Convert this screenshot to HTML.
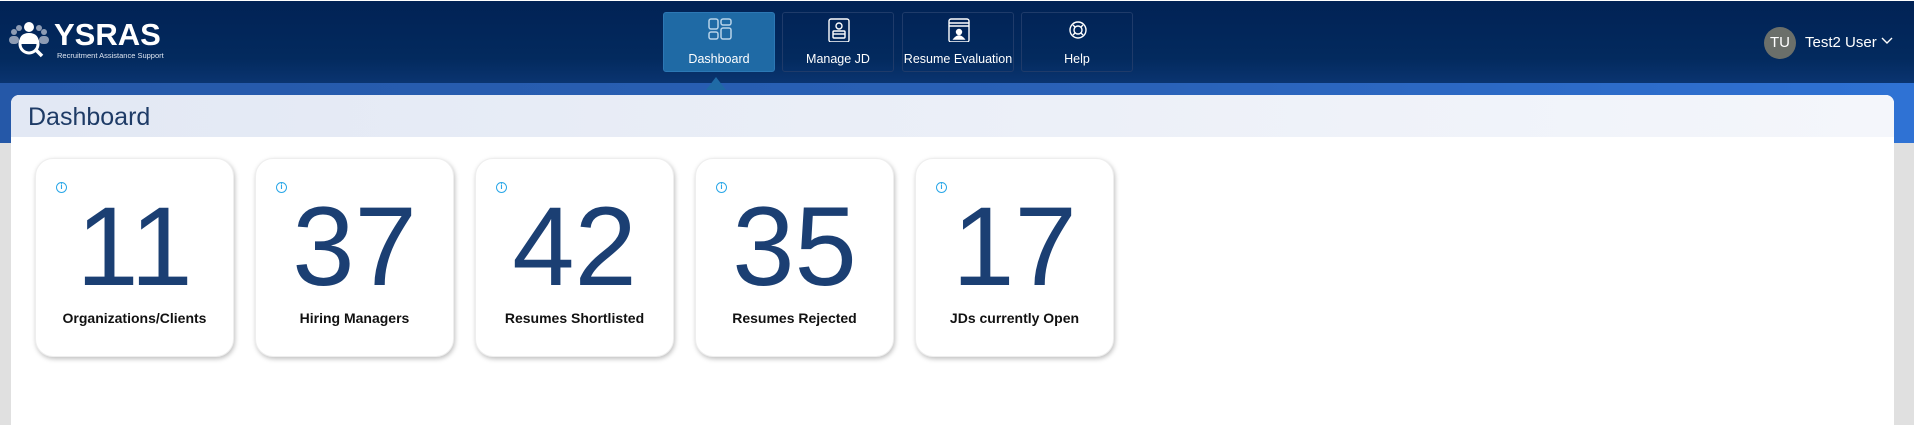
<!DOCTYPE html>
<html><head><meta charset="utf-8"><style>
*{margin:0;padding:0;box-sizing:border-box}
body{width:1914px;height:407px;overflow:hidden;background:#e0e0e0;font-family:"Liberation Sans",sans-serif;position:relative}
.hdr{position:absolute;left:0;top:1px;width:1914px;height:82px;background:linear-gradient(#012255 0%,#032a5e 70%,#0a3470 100%)}
.band{position:absolute;left:0;top:83px;width:1914px;height:60px;background:linear-gradient(90deg,#2558a8,#2a62b8 60%,#2f72d4)}
.panel{position:absolute;left:11px;top:95px;width:1883px;height:330px;background:#fff;border-radius:8px 8px 0 0;overflow:hidden}
.ph{height:42px;background:linear-gradient(90deg,#e2e8f4,#f4f6fb);padding-left:17px;font-size:25px;color:#1e3b66;line-height:44px}
.nav{position:absolute;top:12px;width:112px;height:60px;border:1px solid #1f3b6a;border-radius:3px;color:#fff;font-size:12.5px;text-align:center}
.nav span{position:absolute;left:0;right:0;top:39px;white-space:nowrap}
.nav svg{position:absolute;left:44px;top:5px}
.card{position:absolute;top:158px;width:199px;height:199px;background:#fff;border-radius:18px;box-shadow:1px 2px 5px rgba(0,0,0,.25);border:1px solid #eee}
.card .i{position:absolute;left:20px;top:23px;width:11px;height:11px;border:1.3px solid #2aa7e8;border-radius:50%;color:#2aa7e8;font-size:8px;line-height:8px;text-align:center;font-weight:bold}
.card .n{position:absolute;left:0;right:0;top:18px;text-align:center;font-size:112px;color:#1b3f73;line-height:140px;letter-spacing:0}
.card .l{position:absolute;left:0;right:0;top:151px;text-align:center;font-size:14px;font-weight:bold;color:#111}
</style></head><body>
<div style="position:absolute;left:0;top:0;width:1914px;height:1px;background:#fff"></div>
<div class="hdr"></div>
<div class="band"></div>
<svg style="position:absolute;left:7px;top:20px" width="44" height="40" viewBox="0 0 44 40">
<g fill="#8e9cb4"><circle cx="7" cy="12" r="3"/><rect x="2" y="16" width="10" height="8" rx="4"/><circle cx="37" cy="12" r="3"/><rect x="32" y="16" width="10" height="8" rx="4"/><circle cx="12" cy="8" r="3"/><circle cx="32" cy="8" r="3"/></g>
<circle cx="22" cy="7" r="5" fill="#fff"/><path d="M12 24 Q12 13 22 13 Q32 13 32 24Z" fill="#fff"/>
<circle cx="22" cy="24" r="9" fill="none" stroke="#fff" stroke-width="3"/><path d="M29 30 L35 36" stroke="#fff" stroke-width="3.5"/></svg>
<div style="position:absolute;left:54px;top:17px;font-size:31px;font-weight:bold;color:#fff;letter-spacing:0">YSRAS</div>
<div style="position:absolute;left:57px;top:51px;font-size:7.5px;color:#dfe6f2">Recruitment Assistance Support</div>

<div class="nav" style="left:663px;background:#1f6aa5;border-color:#2c78b5"><svg width="24" height="24" viewBox="0 0 24 24" fill="none" stroke="#b7d3ea" stroke-width="1.5"><rect x="1" y="1" width="9" height="10" rx="2"/><rect x="13" y="1" width="10" height="6" rx="2"/><rect x="1" y="14" width="9" height="7" rx="2"/><rect x="13" y="10" width="10" height="11" rx="2"/></svg><span>Dashboard</span></div>
<div style="position:absolute;left:706px;top:77px;border-left:10px solid transparent;border-right:10px solid transparent;border-bottom:13px solid #1f6aa5"></div>
<div class="nav" style="left:782px"><svg width="24" height="24" viewBox="0 0 24 24" fill="none" stroke="#fff" stroke-width="1.4"><rect x="2" y="1" width="20" height="23" rx="2"/><circle cx="12" cy="8" r="3"/><rect x="6" y="13" width="12" height="7" rx="1"/><path d="M6 16h12"/></svg><span>Manage JD</span></div>
<div class="nav" style="left:902px"><svg width="24" height="24" viewBox="0 0 24 24" fill="none" stroke="#fff" stroke-width="1.4"><rect x="2" y="1" width="20" height="23" rx="2"/><path d="M2 5h20M2 8h20"/><circle cx="12" cy="14" r="2.5" fill="#fff"/><path d="M7 21 Q12 15 17 21Z" fill="#fff"/></svg><span>Resume Evaluation</span></div>
<div class="nav" style="left:1021px"><svg width="24" height="24" viewBox="0 0 24 24" fill="none" stroke="#fff" stroke-width="1.4"><circle cx="12" cy="12" r="8"/><circle cx="12" cy="12" r="4"/><path d="M7 7l2 2M17 7l-2 2M7 17l2-2M17 17l-2-2"/></svg><span>Help</span></div>

<div style="position:absolute;left:1764px;top:27px;width:32px;height:32px;border-radius:50%;background:#6b6f6a;color:#fff;font-size:15px;line-height:32px;text-align:center">TU</div>
<div style="position:absolute;left:1805px;top:34px;font-size:15px;color:#fff">Test2 User</div>
<svg style="position:absolute;left:1881px;top:37px" width="12" height="8" viewBox="0 0 12 8"><path d="M1 1l5 5 5-5" fill="none" stroke="#fff" stroke-width="1.4"/></svg>

<div class="panel"><div class="ph">Dashboard</div></div>

<div class="card" style="left:35px"><div class="i">i</div><div class="n">11</div><div class="l">Organizations/Clients</div></div>
<div class="card" style="left:255px"><div class="i">i</div><div class="n">37</div><div class="l">Hiring Managers</div></div>
<div class="card" style="left:475px"><div class="i">i</div><div class="n">42</div><div class="l">Resumes Shortlisted</div></div>
<div class="card" style="left:695px"><div class="i">i</div><div class="n">35</div><div class="l">Resumes Rejected</div></div>
<div class="card" style="left:915px"><div class="i">i</div><div class="n">17</div><div class="l">JDs currently Open</div></div>
</body></html>
